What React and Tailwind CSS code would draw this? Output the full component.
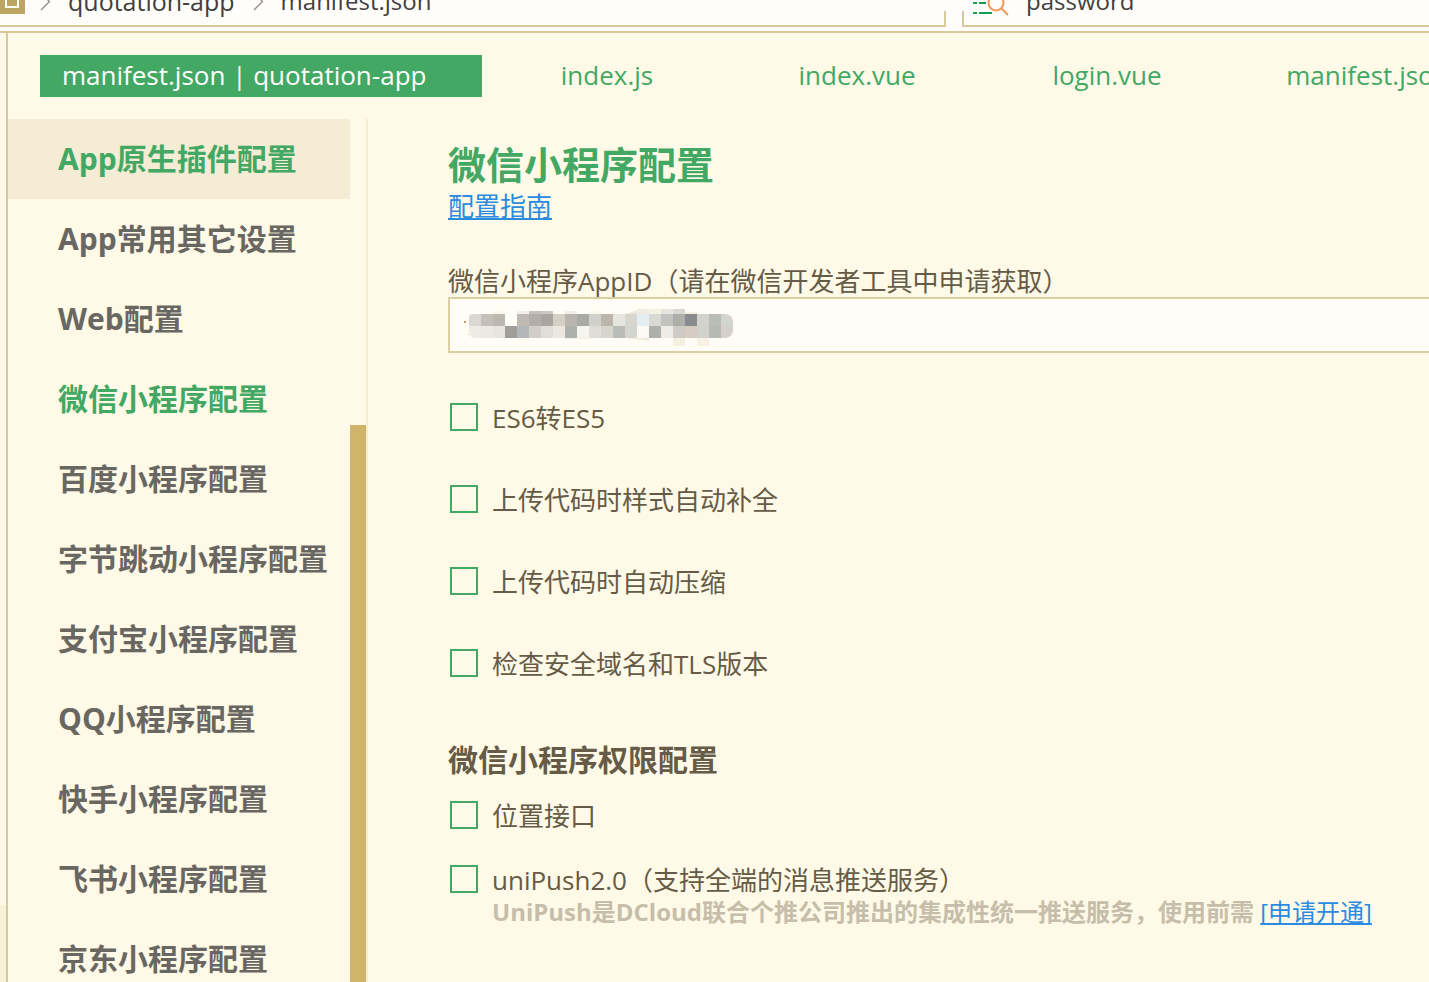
const tabs = [
  { name: 'index.js', width: 'w-[250px]' },
  { name: 'index.vue', width: 'w-[250px]' },
  { name: 'login.vue', width: 'w-[250px]' },
  { name: 'manifest.json', width: 'w-[272px]' },
];

const sections = [
  'App原生插件配置',
  'App常用其它设置',
  'Web配置',
  '微信小程序配置',
  '百度小程序配置',
  '字节跳动小程序配置',
  '支付宝小程序配置',
  'QQ小程序配置',
  '快手小程序配置',
  '飞书小程序配置',
  '京东小程序配置',
];

const options = ['ES6转ES5', '上传代码时样式自动补全', '上传代码时自动压缩', '检查安全域名和TLS版本'];

// Mosaic cells, 12px each: [column, top, height, colour]
const upper = ['#dbd8d2', '#c5c0ba', '#bdb8b1', '#fffdf6', '#bfbbb4', '#b3aea8', '#aaa5a0', '#d4d0c8', '#bab5af', '#a9aaa5', '#d0d1cc', '#bbb5ad', '#e6e6df', '#d6d6cf', '#e4edef', '#dadad4', '#c3c3bf', '#aeaeaa', '#898b90', '#d3d3ce', '#b9bcb7', '#d2d4cf'];
const lower = ['#edebe6', '#ebe9e3', '#e7e5df', '#a09e9a', '#b4b7b7', '#d2cdc8', '#e1ddd7', '#ebe8e2', '#aeb0ac', '#f5f5ee', '#dfddd6', '#d5d5cd', '#babcb7', '#d5d5cf', '#fcf9f3', '#aeb0ac', '#efebe5', '#d0cac4', '#d6ccc1', '#d2d2cc', '#b6b9b4', '#d5d0c9'];
const fringe = [
  [2, 2, 3, '#faf8ee'], [4, 2, 3, '#f3f1ea'], [5, 2, 3, '#c3c0bb'], [6, 2, 3, '#cbc8c2'], [8, 2, 3, '#f2efe8'], [10, 2, 3, '#faf8ee'],
  [14, 0, 5, '#f0ece4'], [15, 0, 5, '#f5f2e4'], [16, 0, 5, '#e6e5df'], [17, 0, 5, '#d8d9d4'], [18, 3, 2, '#f4f0e4'],
  [8, 29, 1, '#f4f1e2'], [9, 29, 1, '#f4f1e2'], [17, 29, 8, '#f4f0df'], [19, 29, 8, '#f8f0e2'],
];

function Mosaic() {
  return (
    <svg className="pointer-events-none absolute left-[15px] top-3" width="272" height="38" aria-hidden="true">
      <defs>
        <clipPath id="pill"><path d="M12 5H262A8 8 0 0 1 270 13V21A8 8 0 0 1 262 29H12A6 6 0 0 1 6 23V9A4 4 0 0 1 10 5Z" /></clipPath>
      </defs>
      <rect x="1" y="12" width="2" height="2" fill="#c2a15c" />
      <rect x="5" y="25" width="1" height="1" fill="#e0b878" />
      <g shapeRendering="crispEdges">
        {fringe.map(([c, y, h, fill], i) => <rect key={i} x={6 + c * 12} y={y} width="12" height={h} fill={fill} />)}
        <path d="M162 5L174 1V5Z" fill="#ebe9df" />
        <path d="M162 29H186V32Z" fill="#f2eedd" />
      </g>
      <g clipPath="url(#pill)">
        {upper.map((fill, i) => <rect key={i} x={6 + i * 12} y="5" width="12" height="12" fill={fill} />)}
        {lower.map((fill, i) => <rect key={i} x={6 + i * 12} y="17" width="12" height="12" fill={fill} />)}
      </g>
    </svg>
  );
}

function Chevron() {
  return (
    <svg width="12" height="20" viewBox="0 0 12 20" fill="none" stroke="#8c8c88" strokeWidth="1.3" aria-hidden="true">
      <path d="M1 19L9.500 10.500L1 2" />
    </svg>
  );
}

function Option({ label }) {
  return (
    <label className="flex items-center gap-[14px] text-[26px] leading-8">
      <input type="checkbox" className="size-7 shrink-0 appearance-none border-2 border-[#42a863] checked:bg-[#42a863]" />
      <span className="pt-[2px]">{label}</span>
    </label>
  );
}

export default function App() {
  return (
    <div className="flex h-screen flex-col overflow-hidden bg-[#fff9e7] font-['Open_Sans','Noto_Sans_CJK_SC',sans-serif] text-[#655b46]">
      <header className="flex h-[33px] shrink-0 items-end gap-4 border-b-2 border-[#d8c99d] bg-[#fffefa] pb-1 text-[24px] leading-8 text-[#3f3f3f]">
        <nav aria-label="路径" className="flex h-4 w-[946px] shrink-0 items-end border-b-2 border-r-2 border-[#d8c99d]">
          <svg className="mb-[11px] shrink-0" width="25" height="28" viewBox="0 0 25 28" aria-hidden="true">
            <path d="M0 0H25V28H0Z" fill="#bfa562" />
            <path d="M6 8V21H18V8" fill="none" stroke="#fffefa" strokeWidth="2" />
          </svg>
          <span className="mb-[14px] ml-[15px]"><Chevron /></span>
          <a href="#app" className="mb-2 ml-4 text-[25px]">quotation-app</a>
          <span className="mb-[14px] ml-[18px]"><Chevron /></span>
          <a href="#manifest" className="mb-2 ml-4">manifest.json</a>
        </nav>
        <div className="flex h-4 min-w-0 flex-1 items-end border-b-2 border-l-2 border-[#d8c99d] pl-[9px]">
          <svg className="mb-[9px] shrink-0" width="37" height="30" viewBox="0 0 37 30" fill="none" aria-hidden="true">
            <path d="M0 17H4M6 17H13M0 27H4M6 27H19" stroke="#12a052" strokeWidth="2" />
            <circle cx="23" cy="17" r="7.500" stroke="#f2995a" strokeWidth="2" />
            <path d="M28 22L35 29" stroke="#f2995a" strokeWidth="2" />
          </svg>
          <input aria-label="搜索" defaultValue="password" className="mb-2 ml-[16px] h-8 min-w-0 flex-1 bg-transparent outline-none" />
        </div>
      </header>

      <div className="flex min-h-0 flex-1">
        <div className="flex w-2 shrink-0 flex-col justify-end border-r-2 border-[#d8c99d]">
          <div className="h-[77px] bg-[#f9f2da]" />
        </div>
        <div className="flex min-w-0 flex-1 flex-col">
          <div className="flex shrink-0 overflow-hidden py-[22px] pl-8 text-[26px] leading-10 text-[#42a863]">
            <button className="h-[42px] w-[442px] shrink-0 bg-[#42a863] pb-[2px] pl-[22px] text-left text-white">manifest.json | quotation-app</button>
            {tabs.map((t) => (
              <button key={t.name} className={`${t.width} shrink-0 pb-[2px] text-center`}>{t.name}</button>
            ))}
          </div>

          <div className="flex min-h-0 flex-1">
            <nav aria-label="配置项" className="w-[342px] shrink-0 overflow-hidden text-[30px] font-bold text-[#696761]">
              {sections.map((s, i) => (
                <a
                  key={s}
                  href={`#section-${i}`}
                  className={`block h-20 whitespace-nowrap pl-[50px] leading-[80px] ${i === 0 ? 'bg-[#f4ecd4]' : ''} ${i === 0 || i === 3 ? 'text-[#42a863]' : ''}`}
                >
                  {s}
                </a>
              ))}
            </nav>
            <div className="flex w-[18px] shrink-0 flex-col border-r-2 border-[#f4ecd4] pt-[306px]">
              <div className="flex-1 bg-[#cfb56a]" />
            </div>

            <main className="min-w-0 flex-1 overflow-hidden pl-20 pt-[19px]">
              <h1 className="text-[38px] font-bold leading-[52px] text-[#42a863]">微信小程序配置</h1>
              <a href="#guide" className="block w-fit text-[26px] leading-8 text-[#2a8be0] underline [text-decoration-skip-ink:none]">配置指南</a>
              <label htmlFor="appid" className="mt-11 block text-[26px] leading-[31px]">微信小程序AppID（请在微信开发者工具中申请获取）</label>
              <div className="relative">
                <input id="appid" className="block h-14 w-full border-2 border-r-0 border-[#dccfa3] bg-[#fffdf6] px-4 outline-none" />
                <Mosaic />
              </div>
              <div className="flex flex-col gap-12 pl-[2px] pt-[47px]">
                {options.map((o) => <Option key={o} label={o} />)}
              </div>
              <h2 className="mt-[60px] text-[30px] font-bold leading-10">微信小程序权限配置</h2>
              <div className="flex flex-col gap-[30px] pl-[2px] pt-[18px]">
                <Option label="位置接口" />
                <Option label="uniPush2.0（支持全端的消息推送服务）" />
              </div>
              <p className="whitespace-nowrap pl-11 text-[24px] font-bold leading-8 text-[#c6beaa]">
                UniPush是DCloud联合个推公司推出的集成性统一推送服务，使用前需{' '}
                <a href="#apply" className="font-normal text-[#2a8be0] underline [text-decoration-skip-ink:none]">[申请开通]</a>
              </p>
            </main>
          </div>
        </div>
      </div>
    </div>
  );
}
